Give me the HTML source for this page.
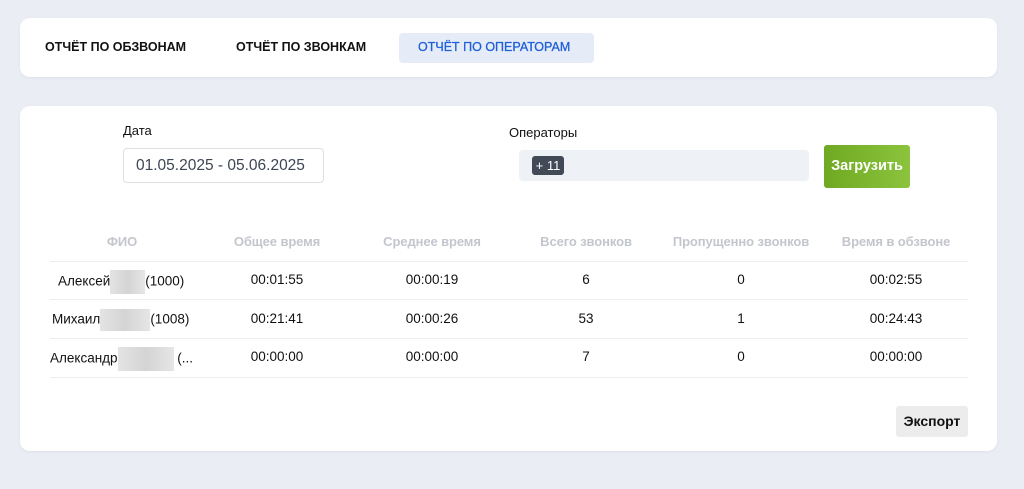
<!DOCTYPE html>
<html><head><meta charset="utf-8"><style>
*{margin:0;padding:0;box-sizing:border-box}
body{width:1024px;height:489px;background:#eaeef4;font-family:"Liberation Sans",sans-serif;position:relative;overflow:hidden;color:#111}
.card{position:absolute;background:#fff;border-radius:10px;box-shadow:0 1px 3px rgba(0,0,0,.05)}
.a{position:absolute;white-space:nowrap}
.tab{font-weight:bold;font-size:12.5px;letter-spacing:0;top:40px}
.h{top:234px;font-size:13px;font-weight:bold;color:#c3c6cc;transform:translateX(-50%);letter-spacing:-0.1px}
.c{font-size:13.5px;color:#111;transform:translateX(-50%)}
.line{position:absolute;left:50px;width:918px;height:1px;background:#eceef1}
.blur{display:inline-block;vertical-align:middle;background:linear-gradient(90deg,#e4e4e4,#d4d4d4,#e6e6e6);height:22px}
</style></head><body>
<div class="card" style="left:20px;top:18px;width:977px;height:59px"></div>
<div class="a tab" style="left:45px">ОТЧЁТ ПО ОБЗВОНАМ</div>
<div class="a tab" style="left:236px">ОТЧЁТ ПО ЗВОНКАМ</div>
<div class="a" style="left:399px;top:33px;width:195px;height:30px;background:#e5ecf8;border-radius:4px"></div>
<div class="a tab" style="left:418px;color:#2060d8;font-weight:normal;-webkit-text-stroke:0.3px #2060d8">ОТЧЁТ ПО ОПЕРАТОРАМ</div>

<div class="card" style="left:20px;top:106px;width:977px;height:345px"></div>
<div class="a" style="left:123px;top:123px;font-size:13px">Дата</div>
<div class="a" style="left:123px;top:148px;width:201px;height:35px;border:1px solid #dcdfe4;border-radius:4px;font-size:15.5px;color:#3d4654;padding:8px 0 0 12px">01.05.2025 - 05.06.2025</div>
<div class="a" style="left:509px;top:125px;font-size:13px">Операторы</div>
<div class="a" style="left:519px;top:150px;width:290px;height:31px;background:#eef1f5;border-radius:4px"></div>
<div class="a" style="left:532px;top:156px;width:32px;height:19px;background:#434a57;border-radius:3px;color:#fff;font-size:13px;text-align:center;line-height:19px">+ 11</div>
<div class="a" style="left:824px;top:145px;width:86px;height:43px;background:linear-gradient(90deg,#6fa822,#8bc43c);border-radius:3px;color:#fff;font-weight:bold;font-size:14.5px;text-align:center;line-height:43px">Загрузить</div>

<div class="a h" style="left:122px">ФИО</div>
<div class="a h" style="left:277px">Общее время</div>
<div class="a h" style="left:432px">Среднее время</div>
<div class="a h" style="left:586px">Всего звонков</div>
<div class="a h" style="left:741px">Пропущенно звонков</div>
<div class="a h" style="left:896px">Время в обзвоне</div>
<div class="line" style="top:261px"></div>
<div class="line" style="top:299px"></div>
<div class="line" style="top:338px"></div>
<div class="line" style="top:377px"></div>

<div class="a" style="left:58px;top:270px;font-size:13.5px">Алексей<span class="blur" style="width:35px;height:24px"></span>(1000)</div>
<div class="a" style="left:52px;top:309px;font-size:13.5px">Михаил<span class="blur" style="width:50px"></span>(1008)</div>
<div class="a" style="left:50px;top:347px;font-size:13.5px">Александр<span class="blur" style="width:56px;height:24px"></span> (...</div>

<div class="a c" style="left:277px;top:272px">00:01:55</div>
<div class="a c" style="left:432px;top:272px">00:00:19</div>
<div class="a c" style="left:586px;top:272px">6</div>
<div class="a c" style="left:741px;top:272px">0</div>
<div class="a c" style="left:896px;top:272px">00:02:55</div>
<div class="a c" style="left:277px;top:311px">00:21:41</div>
<div class="a c" style="left:432px;top:311px">00:00:26</div>
<div class="a c" style="left:586px;top:311px">53</div>
<div class="a c" style="left:741px;top:311px">1</div>
<div class="a c" style="left:896px;top:311px">00:24:43</div>
<div class="a c" style="left:277px;top:349px">00:00:00</div>
<div class="a c" style="left:432px;top:349px">00:00:00</div>
<div class="a c" style="left:586px;top:349px">7</div>
<div class="a c" style="left:741px;top:349px">0</div>
<div class="a c" style="left:896px;top:349px">00:00:00</div>

<div class="a" style="left:896px;top:406px;width:72px;height:31px;background:#ececec;border-radius:3px;font-weight:bold;font-size:14px;text-align:center;line-height:31px">Экспорт</div>
</body></html>
